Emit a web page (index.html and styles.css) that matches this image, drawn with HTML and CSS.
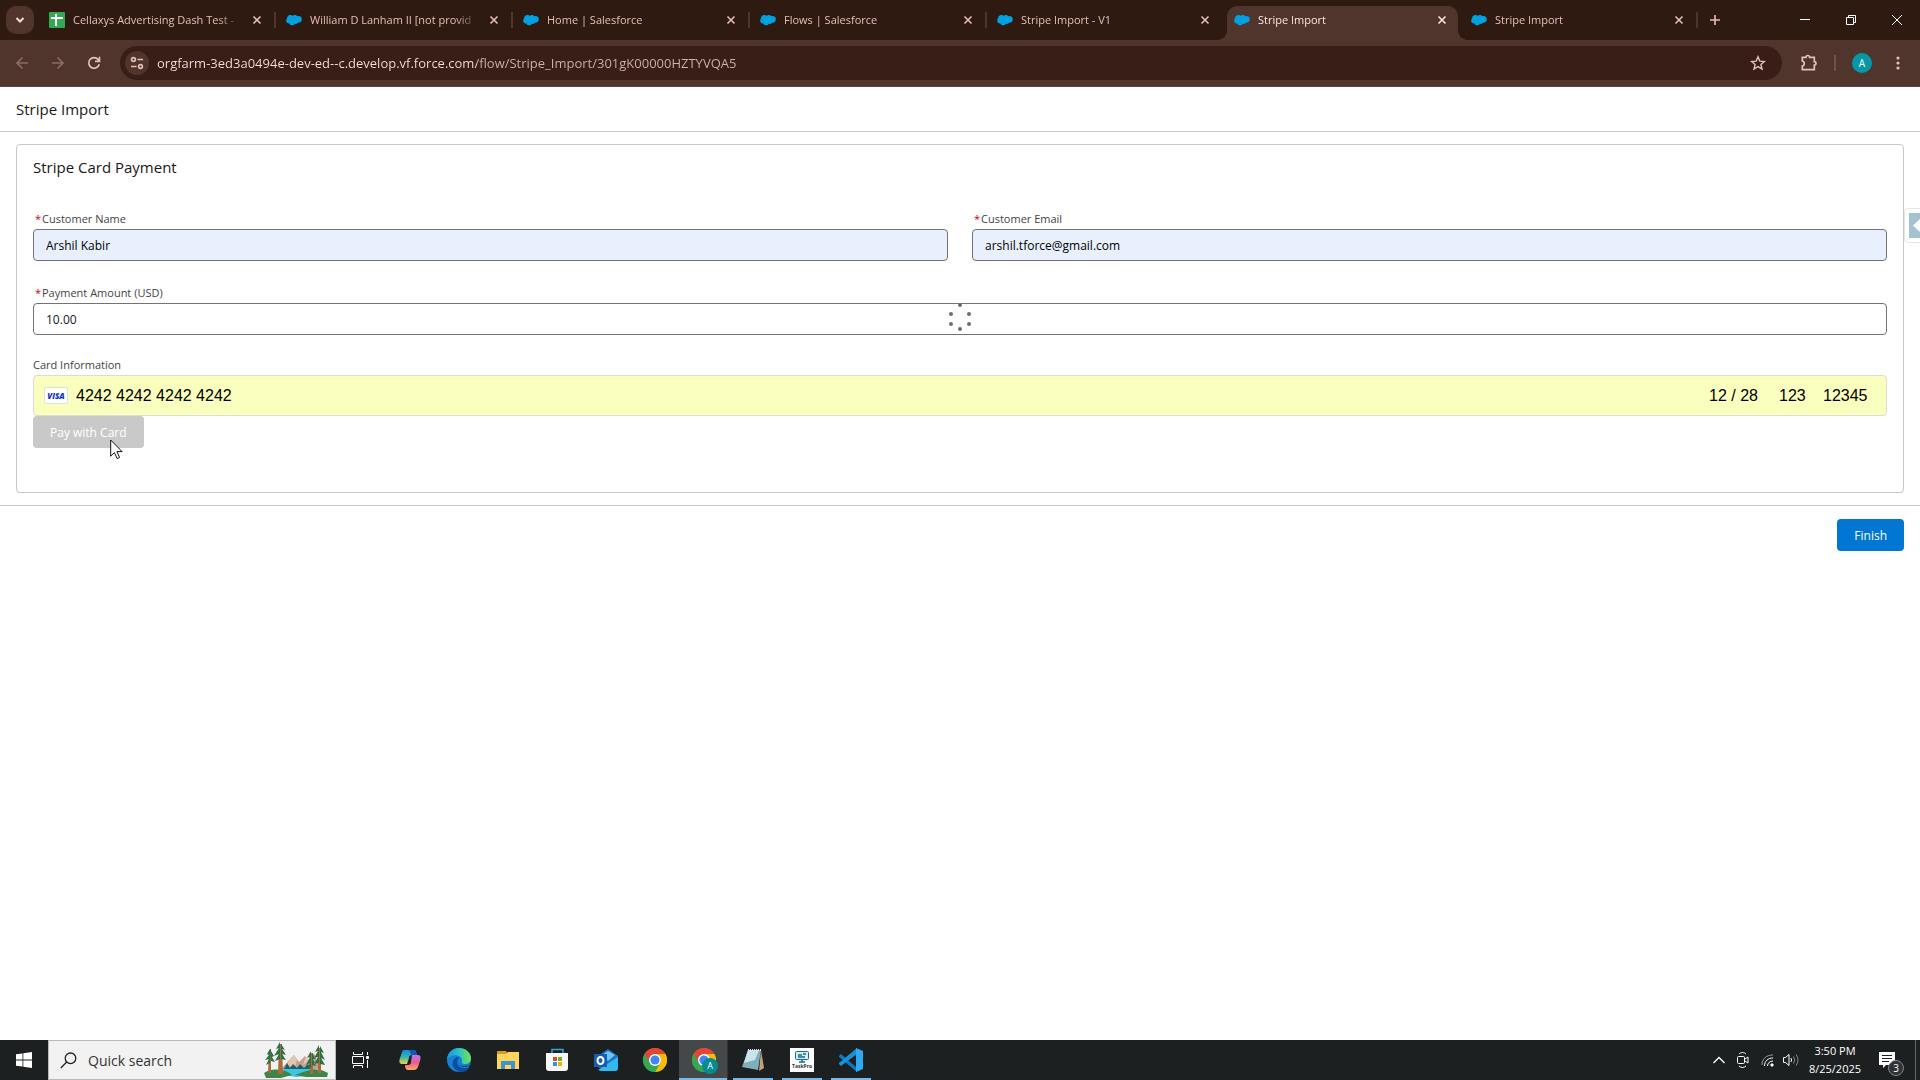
FILE: index.html
```html
<!doctype html>
<html lang="en">
<head>
  <meta charset="utf-8">
  <title>Stripe Import</title>
  <link rel="stylesheet" href="styles.css">
</head>
<body>
  <svg class="sprite" aria-hidden="true">
    <symbol id="cloud" viewBox="0 0 16 12">
      <path fill="#00a1e0" d="M1 4.3C1 2 3 .6 5 1c.8.1 1.300.5 1.700.9C7.500.7 10.300.6 11.200 2.300c2.300-.8 4.800.6 4.600 3.200-.2 2.400-2 3.400-3.800 3.200-.8 1.200-2.200 1.400-3.200 1-1.200 2.300-4.700 2-5.400-.3C1.400 9.700-.1 8.100.2 6.300c.1-.8.4-1.400.8-2z"/>
    </symbol>
    <symbol id="x" viewBox="0 0 10 10">
      <path fill="none" stroke="currentColor" stroke-width="1.600" d="M1.500 1.500l7 7m0-7l-7 7"/>
    </symbol>
    <symbol id="chrome" viewBox="0 0 24 24">
      <circle cx="12" cy="12" r="12" fill="#34a853"/>
      <path fill="#ea4335" d="M1.600 6A12 12 0 0 1 22.400 6H12a6 6 0 0 0-5.200 9z"/>
      <path fill="#fbbc04" d="M22.400 6A12 12 0 0 1 12 24l5.200-9A6 6 0 0 0 12 6z"/>
      <path fill="#34a853" d="M1.600 6A12 12 0 0 0 12 24l5.200-9a6 6 0 0 1-10.400 0z"/>
      <circle cx="12" cy="12" r="6" fill="#fff"/>
      <circle cx="12" cy="12" r="4.600" fill="#4285f4"/>
    </symbol>
  </svg>

  <header class="browser">
    <div class="tabs">
      <button class="tab-search" aria-label="Search tabs">
        <svg width="10" height="10" viewBox="0 0 10 10"><path fill="none" stroke="currentColor" stroke-width="2" d="M1.500 3l3.500 3.500L8.500 3"/></svg>
      </button>
      <div class="tab">
        <svg width="16" height="16" viewBox="0 0 16 16"><rect width="16" height="16" rx="1" fill="#34a853"/><path stroke="#fff" stroke-width="2" d="M2 6h12M7 2v12"/></svg>
        <span class="tab-title">Cellaxys Advertising Dash Test -</span>
        <button aria-label="Close tab"><svg width="10" height="10"><use href="#x"/></svg></button>
      </div>
      <div class="tab">
        <svg width="16" height="12"><use href="#cloud"/></svg>
        <span class="tab-title">William D Lanham II [not provid</span>
        <button aria-label="Close tab"><svg width="10" height="10"><use href="#x"/></svg></button>
      </div>
      <div class="tab">
        <svg width="16" height="12"><use href="#cloud"/></svg>
        <span class="tab-title">Home | Salesforce</span>
        <button aria-label="Close tab"><svg width="10" height="10"><use href="#x"/></svg></button>
      </div>
      <div class="tab">
        <svg width="16" height="12"><use href="#cloud"/></svg>
        <span class="tab-title">Flows | Salesforce</span>
        <button aria-label="Close tab"><svg width="10" height="10"><use href="#x"/></svg></button>
      </div>
      <div class="tab before-active">
        <svg width="16" height="12"><use href="#cloud"/></svg>
        <span class="tab-title">Stripe Import - V1</span>
        <button aria-label="Close tab"><svg width="10" height="10"><use href="#x"/></svg></button>
      </div>
      <div class="tab active">
        <svg width="16" height="12"><use href="#cloud"/></svg>
        <span class="tab-title">Stripe Import</span>
        <button aria-label="Close tab"><svg width="10" height="10"><use href="#x"/></svg></button>
      </div>
      <div class="tab">
        <svg width="16" height="12"><use href="#cloud"/></svg>
        <span class="tab-title">Stripe Import</span>
        <button aria-label="Close tab"><svg width="10" height="10"><use href="#x"/></svg></button>
      </div>
      <button class="new-tab" aria-label="New tab">
        <svg width="12" height="12" viewBox="0 0 12 12"><path stroke="currentColor" stroke-width="1.600" d="M1 6h10M6 1v10"/></svg>
      </button>
      <div class="window-buttons">
        <button aria-label="Minimize"><svg width="10" height="10" viewBox="0 0 10 10"><path stroke="currentColor" d="M0 4.500h10"/></svg></button>
        <button aria-label="Restore"><svg width="10" height="10" viewBox="0 0 10 10"><path fill="none" stroke="currentColor" d="M.5 2.500h7v7h-7zM2.500 2V.5h7v7H8"/></svg></button>
        <button aria-label="Close"><svg width="10" height="10" viewBox="0 0 10 10"><path stroke="currentColor" d="M0 0l10 10M10 0L0 10"/></svg></button>
      </div>
    </div>

    <div class="toolbar">
      <button class="dim" aria-label="Back"><svg width="14" height="14" viewBox="0 0 14 14"><path fill="none" stroke="currentColor" stroke-width="1.700" d="M13 7H2m5.500-5.500L2 7l5.500 5.500"/></svg></button>
      <button class="dim" aria-label="Forward"><svg width="14" height="14" viewBox="0 0 14 14"><path fill="none" stroke="currentColor" stroke-width="1.700" d="M1 7h11M6.500 1.500L12 7l-5.500 5.500"/></svg></button>
      <button aria-label="Reload"><svg width="14" height="14" viewBox="0 0 14 14"><path fill="none" stroke="currentColor" stroke-width="1.700" d="M12.200 8.200a5.300 5.300 0 1 1-1-4.600l1.300 1.500M12.500.8v4.500H8"/></svg></button>
      <div class="omnibox">
        <button class="site-info" aria-label="View site information"><svg width="14" height="14" viewBox="0 0 14 14" fill="none" stroke="currentColor" stroke-width="1.600"><circle cx="3.500" cy="3.500" r="1.900"/><circle cx="10.500" cy="10.500" r="1.900"/><path d="M7.500 3.500H13M1 10.500h5.500"/></svg></button>
        <input class="url" type="text" aria-label="Address" value="orgfarm-3ed3a0494e-dev-ed--c.develop.vf.force.com/flow/Stripe_Import/301gK00000HZTYVQA5">
        <button class="star" aria-label="Bookmark this tab"><svg width="16" height="16" viewBox="0 0 16 16"><path fill="none" stroke="currentColor" stroke-width="1.400" d="M8 1.800l1.800 4.300 4.600.4-3.500 3 1.100 4.600-4-2.500-4 2.500 1.100-4.600-3.500-3 4.600-.4z"/></svg></button>
      </div>
      <button aria-label="Extensions"><svg width="18" height="18" viewBox="0 0 18 18"><path fill="none" stroke="currentColor" stroke-width="1.700" d="M2.300 3.300H6c0-2.400 3.600-2.400 3.600 0h4.700v4.300c2.200 0 2.200 3.400 0 3.400v4.700h-12V12c2.600-.3 2.600-4.600 0-5z"/></svg></button>
      <span class="divider"></span>
      <button class="avatar" aria-label="Profile">A</button>
      <button aria-label="Menu"><svg width="4" height="14" viewBox="0 0 4 14" fill="currentColor"><circle cx="2" cy="2" r="1.600"/><circle cx="2" cy="7" r="1.600"/><circle cx="2" cy="12" r="1.600"/></svg></button>
    </div>
  </header>

  <main>
    <h1>Stripe Import</h1>
    <form class="flow">
      <section class="card">
        <h2>Stripe Card Payment</h2>
        <div class="row">
          <div class="field">
            <label for="name"><abbr>*</abbr>Customer Name</label>
            <input class="autofill" id="name" type="text" value="Arshil Kabir">
          </div>
          <div class="field">
            <label for="email"><abbr>*</abbr>Customer Email</label>
            <input class="autofill" id="email" type="text" value="arshil.tforce@gmail.com">
          </div>
        </div>
        <div class="field amount">
          <label for="amount"><abbr>*</abbr>Payment Amount (USD)</label>
          <input id="amount" type="text" value="10.00">
          <svg class="spinner" width="24" height="30" viewBox="0 0 24 30" fill="#706e6b"><circle cx="12" cy="3" r="2"/><circle cx="3" cy="12" r="2"/><circle cx="21" cy="12" r="2"/><circle cx="3" cy="22" r="2"/><circle cx="21" cy="22" r="2"/><circle cx="12" cy="27" r="2"/></svg>
        </div>
        <label class="card-label" for="number">Card Information</label>
        <div class="card-element">
          <span class="visa">VISA</span>
          <input class="number" id="number" type="text" value="4242 4242 4242 4242">
          <input class="expiry" type="text" aria-label="Expiry date" value="12 / 28">
          <input class="cvc" type="text" aria-label="CVC" value="123">
          <input class="zip" type="text" aria-label="ZIP" value="12345">
        </div>
        <div class="pay">
          <button class="button" type="button" disabled>Pay with Card</button>
          <svg class="pointer" width="14" height="21" viewBox="0 0 14 21"><path fill="#fff" stroke="#111" d="M.7 1v16.200l3.700-3.600 2.700 6 2.500-1.100-2.700-5.900h5.200z"/></svg>
        </div>
      </section>
      <footer>
        <button class="button brand" type="button">Finish</button>
      </footer>
    </form>
    <button class="drawer" aria-label="Open panel">
      <svg width="11" height="25" viewBox="0 0 11 25"><path fill="#a4c2cf" d="M0 0h11v25H0z"/><path fill="#fff" d="M11 6v13l-7-6.500z"/></svg>
    </button>
  </main>

  <nav class="taskbar">
    <button class="start" aria-label="Start"><svg width="16" height="16" viewBox="0 0 16 16" fill="#fff"><path d="M0 2.300l6.500-.9v6.200H0zM7.300 1.300L16 0v7.600H7.300zM0 8.400h6.500v6.200L0 13.700zM7.300 8.400H16V16l-8.700-1.300z"/></svg></button>
    <div class="search">
      <svg width="17" height="17" viewBox="0 0 17 17" fill="none" stroke="#222" stroke-width="1.300"><circle cx="10.500" cy="6.300" r="5.300"/><path d="M6.700 10L.8 16"/></svg>
      <input type="text" aria-label="Quick search" placeholder="Quick search">
      <svg class="scene" width="66" height="36" viewBox="0 0 66 36">
        <path fill="#c4a091" d="M17 27L30 13l5 7 6-6 4 5 5-8 6 16z"/>
        <path fill="#e5c5b0" d="M22 23l8-10 3 5-2 7zM39 23l3-9 3 5z"/>
        <path fill="#1c6266" d="M19 29l4-8 3 5 3-4 4 4 3-4 4 4 4-4 4 7z"/>
        <path fill="#3ec4e9" d="M14 27h38v6l-20 2-13-2z"/>
        <path fill="#3c8748" d="M0 31c7-5 16-4 24-1l4 3-11 3H2zM64 31c-8-5-16-4-25-1l-8 3 11 2h21z"/>
        <path fill="#b0683a" d="M5 8h2v23H4zM15 2h3l1 30h-5zM46 11h3v21h-3zM54 6h3v25h-3z"/>
        <path fill="#2c7046" d="M6 7l-3 5 2 1-4 5 4-1-3 6 4-2 1-14zM7 9l3 5-2 1 3 5-4-1zM16 0l-4 7 3-1-5 8 5-2-4 7 5-2zM17 2l4 6-3-1 4 6-4-1 4 6-5-1zM47 9l-4 7 3-1-4 8 4-2-3 6 4-1zM48 11l4 6-3 0 3 7-4-1zM55 3l-4 7 3-1-4 7 4-1-4 7 5-1zM56 4l4 7-3-1 4 8-4-2 4 7-5-1z"/>
      </svg>
    </div>
    <div class="apps">
      <button aria-label="Task View"><svg width="18" height="16" viewBox="0 0 18 16" fill="none" stroke="#fff"><path d="M1.500 0v2.500h9V0M1.500 16v-2.500h9V16M.5 4.500h11v7H.5zM15.500 0v3M15.500 8v8"/><path fill="#fff" d="M14.500 4.500h2v2h-2z"/></svg></button>
      <button aria-label="Copilot">
        <svg width="22" height="22" viewBox="0 0 22 22">
          <defs><linearGradient id="cp1" x2="0" y2="1"><stop stop-color="#1687e5"/><stop offset=".5" stop-color="#32b7a9"/><stop offset="1" stop-color="#f3d33c"/></linearGradient><linearGradient id="cp2" x2="0" y2="1"><stop stop-color="#b27af0"/><stop offset=".5" stop-color="#ee5a96"/><stop offset="1" stop-color="#ffac55"/></linearGradient></defs>
          <path fill="url(#cp1)" d="M5 1h10c2 0 2 2 3 5h-5c-2 0-3 1-3 3l-2 6H3c-3 0-3-3-2-6l2-6c0-1 1-2 2-2z"/>
          <path fill="#1756b8" d="M10 1h5c2 0 2 2 3 5h-5c-2 0-1-4-3-5z"/>
          <path fill="url(#cp2)" d="M13 6h6c3 0 3 3 2 6l-2 6c-1 2-2 3-4 3H9c-2 0-3-2-3-5h3c2 0 3-1 3-3z"/>
        </svg>
      </button>
      <button aria-label="Microsoft Edge">
        <svg width="24" height="24" viewBox="0 0 24 24">
          <defs><linearGradient id="edge"><stop stop-color="#1798df"/><stop offset=".5" stop-color="#2dc2c7"/><stop offset="1" stop-color="#75e34c"/></linearGradient></defs>
          <circle cx="12" cy="12" r="12" fill="#1680d3"/>
          <path fill="url(#edge)" d="M0 11C1 4 6 0 12 0c7 0 12 5 12 10 0 4-3 6-6 6s-4-1-3-3c1-5-8-9-15-2z"/>
          <path fill="#0c4e9c" d="M10 9c-8 4-4 14 4 15 4 0 7-2 9-5-6 3-13 0-13-5 0-2 1-4 3-4z"/>
          <path fill="#20252a" d="M11 11c-2 5 3 9 12 6-5 4-14 1-12-6z"/>
        </svg>
      </button>
      <button aria-label="File Explorer"><svg width="22" height="18" viewBox="0 0 22 18"><path fill="#d99a22" d="M0 0h9l2 3H0z"/><path fill="#ffd35c" d="M0 3h9l2-2h11v17H0z"/><path fill="#3e94cf" d="M4 10h14v8h-4v-4H8v4H4z"/></svg></button>
      <button aria-label="Microsoft Store"><svg width="24" height="24" viewBox="0 0 24 24"><path fill="none" stroke="#2da7df" stroke-width="1.500" d="M7 7V1.500h11V7"/><path fill="#f7f7f7" d="M1 5h22v15c0 2-1 3-3 3H4c-2 0-3-1-3-3z"/><path fill="#e24b22" d="M8 9h4v4H8z"/><path fill="#6eb518" d="M13 9h4v4h-4z"/><path fill="#279ddf" d="M8 14h4v4H8z"/><path fill="#f5ac0d" d="M13 14h4v4h-4z"/></svg></button>
      <button aria-label="Outlook"><svg width="24" height="24" viewBox="0 0 24 24"><path fill="#1d73c9" d="M4 8l10-7 10 7v12H5z"/><path fill="#74c3f4" d="M8 7l6-4 7 4-7 6z"/><path fill="#31baf0" d="M4 22l20-13v11c0 2-1 3-3 3H7z"/><path fill="#155eb1" d="M0 6h13v13H0z"/><ellipse cx="6.500" cy="12.500" rx="3" ry="3.500" fill="none" stroke="#fff" stroke-width="2"/></svg></button>
      <button aria-label="Google Chrome"><svg width="24" height="24"><use href="#chrome"/></svg></button>
      <button class="open current" aria-label="Google Chrome, Stripe Import"><svg width="24" height="24"><use href="#chrome"/></svg><span class="profile">A</span></button>
      <button class="open" aria-label="Notepad"><svg width="24" height="24" viewBox="0 0 24 24"><path fill="#bda47a" d="M20 2l3 18-5 3z"/><path fill="#80afbc" d="M7 2h13l-3 20-16-3z"/><path fill="#c8e5e9" d="M7 2h11l-4 10L3 15z"/><path stroke="#e7e7e7" stroke-width="2" stroke-dasharray="1 1" d="M7 2h14"/></svg></button>
      <button class="open" aria-label="TaskPro"><span class="taskpro"><svg width="14" height="12" viewBox="0 0 14 12"><rect x=".5" y=".5" width="13" height="8" rx="1" fill="#d7edf5" stroke="#176899"/><path stroke="#33a165" stroke-width="2" d="M3 4h4"/><path stroke="#176899" stroke-width="1.500" d="M8 3h3M3 6h7M7 9v2M4 11h6"/></svg>TaskPro</span></button>
      <button class="open" aria-label="Visual Studio Code"><svg width="24" height="24" viewBox="0 0 24 24"><path fill="#087bc2" d="M0 8l2-2 16 14v4L0 9z"/><path fill="#1693d8" d="M0 16l2 2L18 6V0L0 15z"/><path fill="#2aabf2" d="M17 0l7 3v18l-7 3z"/></svg></button>
    </div>
    <div class="tray">
      <button aria-label="Show hidden icons"><svg width="12" height="8" viewBox="0 0 12 8"><path fill="none" stroke="#fff" stroke-width="1.300" d="M.5 7L6 1.500 11.500 7"/></svg></button>
      <button aria-label="Camera in use"><svg width="12" height="16" viewBox="0 0 12 16" fill="none" stroke="#fff"><rect x=".5" y="4.500" width="7" height="7" rx="1"/><path d="M8 7l3-2v6L8 9M2 2c2-2 5-2 7 0M2 14c2 2 5 2 7 0"/></svg></button>
      <button aria-label="Network"><svg width="13" height="13" viewBox="0 0 13 13" fill="none" stroke="#fff"><path stroke="#999" d="M1 11C1 5 5 1 12 1"/><path d="M3.500 12C3.500 7 7 4 12 4M6.500 12C6.500 9 9 7 12 7"/><circle cx="11" cy="11" r="1.200" fill="#fff"/></svg></button>
      <button aria-label="Volume"><svg width="16" height="14" viewBox="0 0 16 14" fill="none" stroke="#fff"><path d="M.5 4.500h2l3.500-3v11l-3.500-3h-2zM8 5q1 2 0 4"/><path stroke="#888" d="M10.500 3.500q2.500 3.500 0 7M13 1.500q4 5.500 0 11"/></svg></button>
      <button class="clock"><time>3:50 PM</time><time>8/25/2025</time></button>
      <button class="notifications" aria-label="3 new notifications"><svg width="16" height="16" viewBox="0 0 16 16"><path fill="#fff" d="M0 0h16v13H7l-3 3v-3H0z"/><path stroke="#1b1e1d" d="M3 3.500h10M3 6.500h10M3 9.500h7"/></svg><span class="badge">3</span></button>
      <span class="show-desktop"></span>
    </div>
  </nav>
</body>
</html>
```
FILE: styles.css
```css
* {
  box-sizing: border-box;
}
body {
  display: flex;
  flex-direction: column;
  margin: 0;
  min-height: 100vh;
  background: #fff;
  color: #181818;
  font-family: "Open Sans", "Noto Sans", sans-serif;
  font-size: 12px;
}
button, input {
  margin: 0;
  padding: 0;
  border: 0;
  background: none;
  color: inherit;
  font: inherit;
  outline: none;
}
svg {
  display: block;
  flex: none;
}
.sprite {
  position: absolute;
  width: 0;
  height: 0;
}

/* browser */
.browser {
  color: #e6bfb4;
}
.tabs {
  display: flex;
  height: 40px;
  background: #2f1a12;
}
.tab-search {
  display: flex;
  align-items: center;
  justify-content: center;
  width: 28px;
  height: 28px;
  margin: 6px 7px 6px 6px;
  border-radius: 10px;
  background: #50352d;
  color: #f5ded6;
}
.tab {
  position: relative;
  display: flex;
  flex: 0 1 237px;
  align-items: center;
  min-width: 0;
  padding: 0 16px 0 8px;
}
.tab::after {
  content: "";
  position: absolute;
  top: 12px;
  right: 2px;
  width: 2px;
  height: 16px;
  background: #50352d;
}
.before-active::after {
  display: none;
}
.tab-title {
  flex: 1;
  overflow: hidden;
  margin: 0 10px 0 8px;
  font-size: 11px;
  line-height: 18px;
  white-space: nowrap;
  -webkit-mask-image: linear-gradient(to left, transparent, #000 24px);
  mask-image: linear-gradient(to left, transparent, #000 24px);
}
.active {
  z-index: 1;
  color: #fbe6df;
}
.active > * {
  z-index: 1;
}
.active::after {
  top: 6px;
  right: 5px;
  bottom: 0;
  left: 1px;
  z-index: 0;
  width: auto;
  height: auto;
  border-radius: 10px 10px 0 0;
}
.active::before {
  content: "";
  position: absolute;
  right: -5px;
  bottom: 0;
  left: -9px;
  height: 10px;
  background:
    radial-gradient(circle at 0 0, transparent 10px, #50352d 10px) left / 10px 10px no-repeat,
    radial-gradient(circle at 100% 0, transparent 10px, #50352d 10px) right / 10px 10px no-repeat;
}
.new-tab {
  display: flex;
  align-items: center;
  justify-content: center;
  width: 30px;
}
.window-buttons {
  display: flex;
  margin-left: auto;
  color: #fff;
}
.window-buttons button {
  display: flex;
  align-items: center;
  justify-content: center;
  width: 46px;
}
.toolbar {
  display: flex;
  align-items: center;
  height: 47px;
  padding: 0 4px;
  border-bottom: 1px solid #5b4742;
  background: #50352d;
}
.toolbar > button {
  display: flex;
  align-items: center;
  justify-content: center;
  width: 36px;
  height: 36px;
}
.toolbar > .dim {
  color: #8d6b61;
}
.omnibox {
  display: flex;
  flex: 1;
  align-items: center;
  height: 34px;
  margin: 0 9px 0 8px;
  padding: 0 16px 0 5px;
  border-radius: 17px;
  background: #391e17;
}
.site-info {
  display: flex;
  align-items: center;
  justify-content: center;
  width: 24px;
  height: 24px;
  margin-right: 8px;
  border-radius: 50%;
  background: #50352d;
}
.url {
  flex: 1;
  height: 24px;
  font-size: 13px;
  /* host is brighter than the path */
  background: linear-gradient(to right, #f7e2db 320px, #cfb4aa 320px);
  -webkit-background-clip: text;
  background-clip: text;
  color: transparent;
}
.divider {
  width: 2px;
  height: 16px;
  margin: 0 7px;
  background: #705048;
}
.toolbar > .avatar {
  width: 20px;
  height: 20px;
  margin: 0 8px 0 9px;
  border-radius: 50%;
  background: #0798a7;
  color: #fff;
  font-size: 10px;
}

/* page */
main {
  position: relative;
  flex: 1;
  overflow: hidden;
}
h1, h2 {
  margin: 0;
  font-size: 15px;
  font-weight: 400;
  line-height: 24px;
}
h1 {
  padding: 10px 16px;
  border-bottom: 1px solid #c9c9c9;
}
.card {
  margin: 12px 16px;
  padding: 10px 16px 44px;
  border: 1px solid #c9c9c9;
  border-radius: 4px;
}
.row {
  display: grid;
  grid-template-columns: 1fr 1fr;
  gap: 24px;
  margin-top: 30px;
}
.field {
  display: flex;
  flex-direction: column;
}
.field label, .card-label {
  color: #444;
  font-size: 11px;
  line-height: 20px;
}
.field label {
  padding-left: 2px;
}
abbr {
  display: inline-block;
  width: 7px;
  color: #ba0517;
}
.field input {
  height: 32px;
  padding: 0 12px;
  border: 1px solid #747474;
  border-radius: 4px;
}
.field .autofill {
  background: #e8f0fe;
  color: #000;
}
.amount {
  position: relative;
  margin-top: 22px;
}
.spinner {
  position: absolute;
  bottom: 3px;
  left: calc(50% - 12px);
}
.card-label {
  display: block;
  margin-top: 20px;
}
.card-element {
  display: flex;
  align-items: center;
  height: 41px;
  padding: 0 18px 0 10px;
  border: 1px solid #dddbda;
  border-radius: 4px;
  background: #faffbd;
  color: #000;
  font-family: "Liberation Sans", Arial, sans-serif;
  font-size: 16px;
}
.visa {
  width: 24px;
  margin-right: 8px;
  border: 1px solid #dfe2cf;
  border-radius: 2px;
  background: #fff;
  color: #1434cb;
  font: italic 800 8px/15px "Open Sans", sans-serif;
  text-align: center;
}
.number {
  flex: 1;
}
.expiry {
  width: 70px;
}
.cvc {
  width: 44px;
}
.zip {
  width: 45px;
}
.pay {
  position: relative;
}
.button {
  display: block;
  height: 32px;
  padding: 0 17px;
  border-radius: 4px;
  color: #fff;
}
.button:disabled {
  background: #c9c9c9;
}
.pointer {
  position: absolute;
  top: 23px;
  left: 77px;
}
footer {
  display: flex;
  justify-content: flex-end;
  padding: 13px 16px;
  border-top: 1px solid #c9c9c9;
}
.brand {
  background: #0176d3;
}
.drawer {
  position: absolute;
  top: 121px;
  right: 0;
  padding: 4px 0 4px 4px;
  border: 1px solid #dfe9e9;
  border-right: 0;
  border-radius: 5px 0 0 5px;
  background: #fff;
}

/* taskbar */
.taskbar {
  display: flex;
  height: 40px;
  background: #1d2021;
  color: #fff;
}
.start {
  display: flex;
  align-items: center;
  justify-content: center;
  width: 48px;
}
.search {
  display: flex;
  align-items: center;
  width: 288px;
  padding: 0 5px 0 11px;
  border: 1px solid #b9b9b9;
  background: #f2f2f2;
}
.search input {
  flex: 1;
  min-width: 0;
  margin-left: 11px;
  font-size: 14px;
}
.search input::placeholder {
  color: #333;
  opacity: 1;
}
.apps {
  display: flex;
}
.apps button {
  position: relative;
  display: flex;
  align-items: center;
  justify-content: center;
  width: 49px;
  padding-left: 1px;
}
.open::after {
  content: "";
  position: absolute;
  right: 4px;
  bottom: 0;
  left: 5px;
  height: 2px;
  background: #76b9ed;
}
.apps .current {
  border-right: 1px solid #333;
  background: #454848;
}
.current::after {
  right: 0;
  left: 0;
}
.profile {
  position: absolute;
  right: 9px;
  bottom: 6px;
  width: 16px;
  border-radius: 50%;
  background: #078a91;
  font-size: 9px;
  line-height: 16px;
}
.taskpro {
  display: flex;
  flex-direction: column;
  align-items: center;
  width: 24px;
  height: 24px;
  padding-top: 3px;
  background: #fff;
  color: #333;
  font-size: 5px;
  font-weight: 700;
  line-height: 6px;
}
.tray {
  display: flex;
  margin-left: auto;
}
.tray button {
  display: flex;
  align-items: center;
  justify-content: center;
  width: 24px;
}
.tray .clock {
  flex-direction: column;
  width: 64px;
  font-size: 11px;
  line-height: 18px;
}
.tray .notifications {
  position: relative;
  width: 40px;
}
.badge {
  position: absolute;
  right: 3px;
  bottom: 4px;
  width: 16px;
  border: 1px solid #888;
  border-radius: 50%;
  background: #303333;
  font-size: 10px;
  line-height: 14px;
}
.show-desktop {
  width: 5px;
  margin-left: 8px;
  border-left: 1px solid #666;
}
```
